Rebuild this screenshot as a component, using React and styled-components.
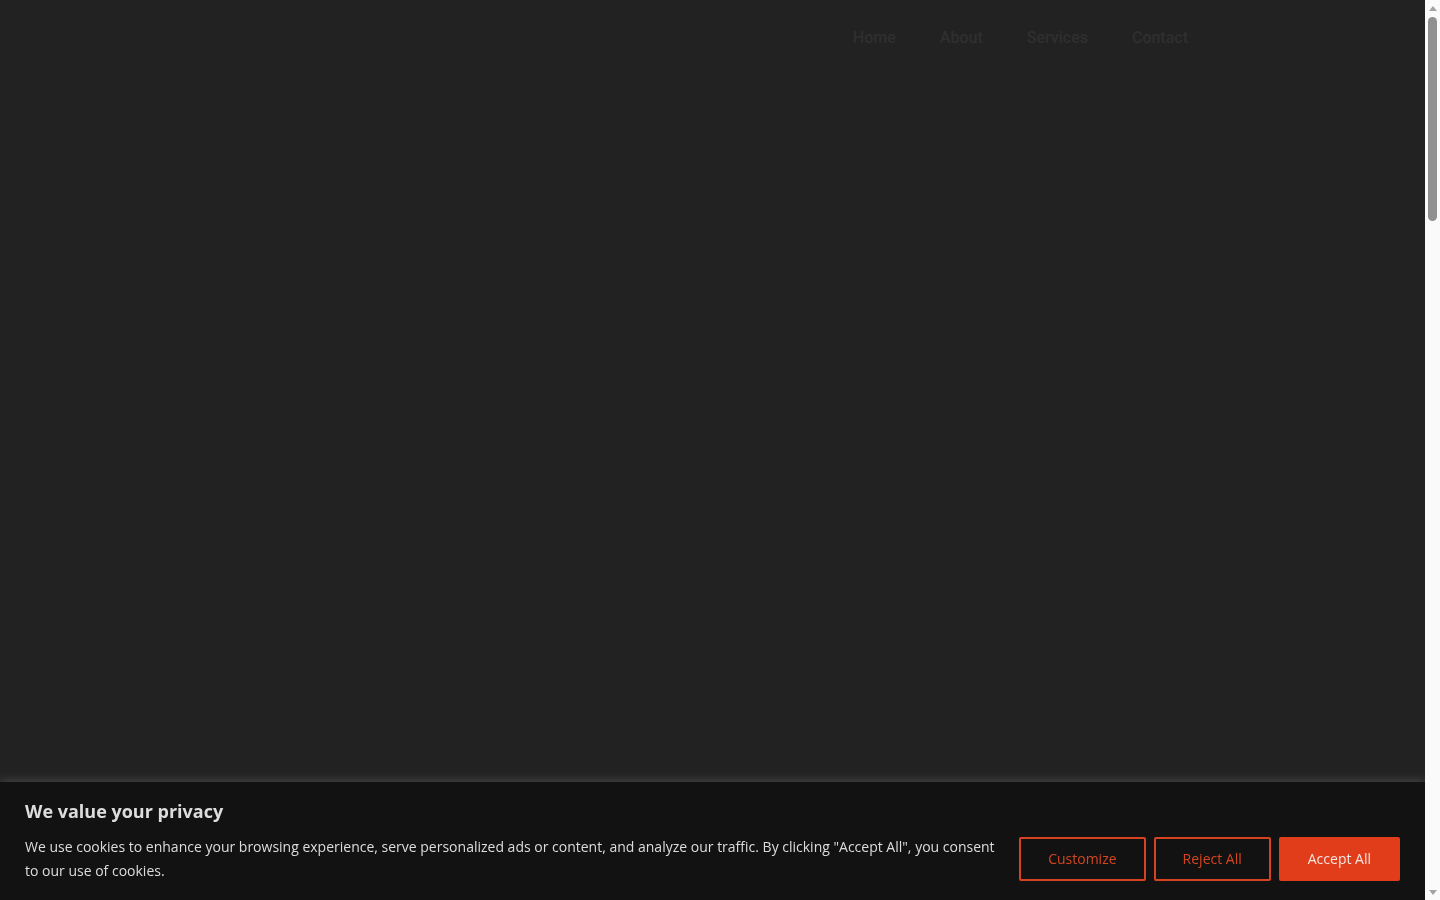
import React from "react";
import styled, { createGlobalStyle } from "styled-components";

const GlobalStyle = createGlobalStyle`
  html, body {
    margin: 0;
    padding: 0;
    background: #222222;
  }
  * {
    box-sizing: border-box;
  }
`;

const links = ["Home", "About", "Services", "Contact"];

export default function App() {
  return (
    <>
      <GlobalStyle />
      <Page>
        <Header>
          <Nav>
            {links.map((l) => (
              <NavLink key={l} href="#">
                {l}
              </NavLink>
            ))}
          </Nav>
        </Header>
        <Main />
      </Page>
      <Banner>
        <Title>We value your privacy</Title>
        <BannerRow>
          <Description>
            We use cookies to enhance your browsing experience, serve
            personalized ads or content, and analyze our traffic. By clicking
            "Accept All", you consent to our use of cookies.
          </Description>
          <Buttons>
            <Btn>Customize</Btn>
            <Btn>Reject All</Btn>
            <Btn $primary>Accept All</Btn>
          </Buttons>
        </BannerRow>
      </Banner>
      <ScrollBar>
        <Arrow $dir="up" />
        <Track>
          <Thumb />
        </Track>
        <Arrow $dir="down" />
      </ScrollBar>
    </>
  );
}

const Page = styled.div`
  background: #222222;
  min-height: 3830px;
  margin-right: 15px;
`;

const Header = styled.header`
  height: 74px;
  display: flex;
  justify-content: flex-end;
  align-items: center;
  padding-right: 237px;
`;

const Nav = styled.nav`
  display: flex;
  gap: 44px;
`;

const NavLink = styled.a`
  font-family: Roboto, "Liberation Sans", sans-serif;
  font-size: 16px;
  font-weight: 500;
  color: #2f2f2f;
  text-decoration: none;
`;

const Main = styled.main``;

const Banner = styled.div`
  position: fixed;
  left: 0;
  right: 15px;
  bottom: 0;
  background: #121212;
  box-shadow: 0 -1px 10px 0 rgba(172, 171, 171, 0.3);
  padding: 20px 25px 17px;
  font-family: "Open Sans", "Liberation Sans", sans-serif;
`;

const Title = styled.h2`
  margin: 0 0 15px;
  font-size: 18px;
  font-weight: 700;
  line-height: 18px;
  color: #dddddd;
`;

const BannerRow = styled.div`
  display: flex;
  align-items: center;
  justify-content: space-between;
  gap: 24px;
`;

const Description = styled.p`
  margin: 0;
  font-size: 14px;
  line-height: 24px;
  color: #dddddd;
  max-width: 975px;
`;

const Buttons = styled.div`
  display: flex;
  gap: 8px;
  flex-shrink: 0;
`;

const Btn = styled.button`
  font-family: "Open Sans", "Liberation Sans", sans-serif;
  font-size: 14px;
  font-weight: 400;
  height: 44px;
  padding: 0 27px 1px;
  border-radius: 2px;
  border: 2px solid ${(p) => (p.$primary ? "#e23d1b" : "#d7421f")};
  background: ${(p) => (p.$primary ? "#e23d1b" : "transparent")};
  color: ${(p) => (p.$primary ? "#f3e6e0" : "#d4461f")};
  cursor: pointer;
`;

const ScrollBar = styled.div`
  position: fixed;
  top: 0;
  right: 0;
  width: 15px;
  height: 100vh;
  background: #fafafa;
  display: flex;
  flex-direction: column;
`;

const Arrow = styled.div`
  height: 15px;
  flex-shrink: 0;
  display: flex;
  align-items: center;
  justify-content: center;
  &::before {
    content: "";
    width: 0;
    height: 0;
    border-left: 4.5px solid transparent;
    border-right: 4.5px solid transparent;
    ${(p) =>
      p.$dir === "up"
        ? "border-bottom: 5px solid #a3a3a3; margin-top: 1px;"
        : "border-top: 5px solid #a3a3a3; margin-bottom: 1px;"}
  }
`;

const Track = styled.div`
  flex: 1;
  padding: 2px 3px;
`;

const Thumb = styled.div`
  height: 204px;
  border-radius: 5px;
  background: #909090;
`;
